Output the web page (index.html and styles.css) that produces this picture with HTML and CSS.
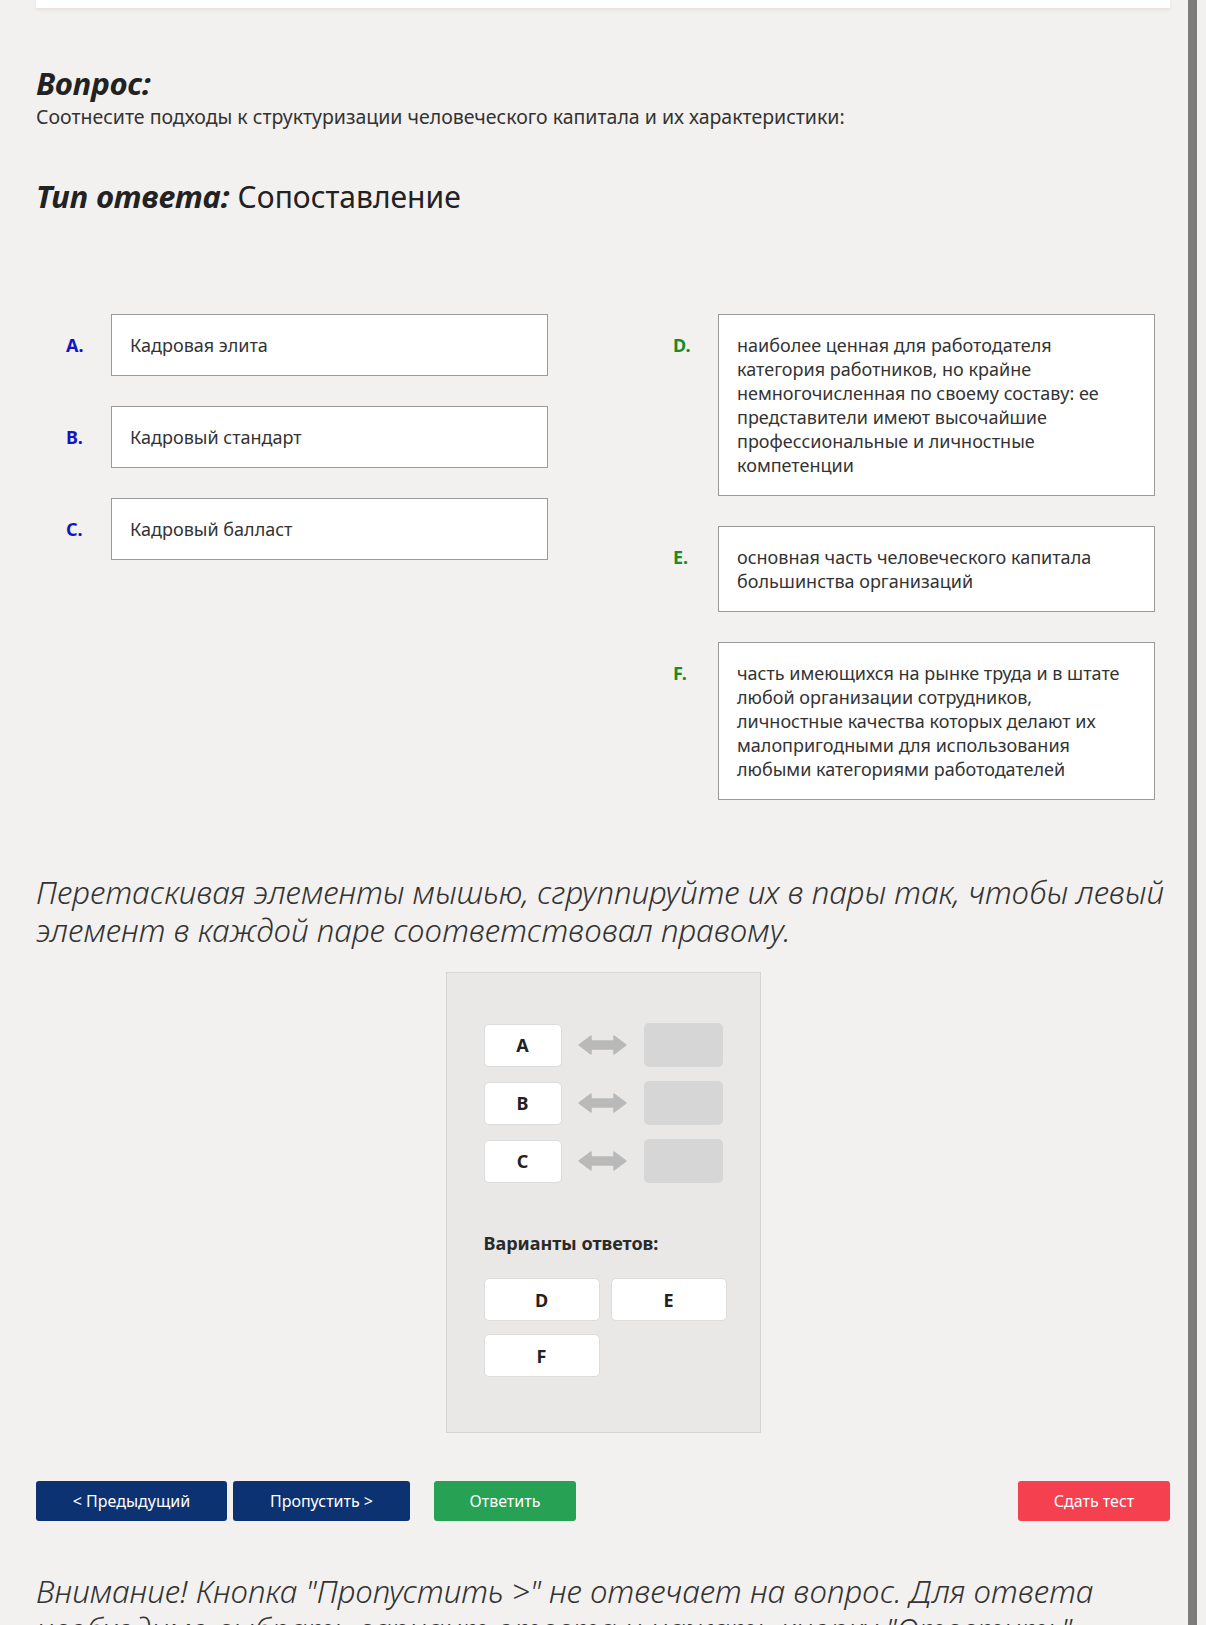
FILE: index.html
```html
<!DOCTYPE html>
<html lang="ru">
  <head>
    <meta charset="UTF-8" />
    <meta name="viewport" content="width=device-width, initial-scale=1.0" />
    <title>Тест — вопрос на сопоставление</title>
    <link rel="stylesheet" href="styles.css">
  </head>
  <body>
    <div class="page">
      <div class="prev-card"></div>

      <h2 class="q-title">Вопрос:</h2>
      <p class="q-text">Соотнесите подходы к структуризации человеческого капитала и их характеристики:</p>

      <h2 class="q-type"><em>Тип ответа:</em> <span>Сопоставление</span></h2>

      <!-- Left and right lists of the matching question -->
      <div class="match">
        <div class="match-col">
          <div class="match-row">
            <span class="mark mark-left">A.</span>
            <div class="match-box">Кадровая элита</div>
          </div>
          <div class="match-row">
            <span class="mark mark-left">B.</span>
            <div class="match-box">Кадровый стандарт</div>
          </div>
          <div class="match-row">
            <span class="mark mark-left">C.</span>
            <div class="match-box">Кадровый балласт</div>
          </div>
        </div>
        <div class="match-col">
          <div class="match-row">
            <span class="mark mark-right">D.</span>
            <div class="match-box">наиболее ценная для работодателя<br>категория работников, но крайне<br>немногочисленная по своему составу: ее<br>представители имеют высочайшие<br>профессиональные и личностные<br>компетенции</div>
          </div>
          <div class="match-row">
            <span class="mark mark-right">E.</span>
            <div class="match-box">основная часть человеческого капитала<br>большинства организаций</div>
          </div>
          <div class="match-row">
            <span class="mark mark-right">F.</span>
            <div class="match-box">часть имеющихся на рынке труда и в штате<br>любой организации сотрудников,<br>личностные качества которых делают их<br>малопригодными для использования<br>любыми категориями работодателей</div>
          </div>
        </div>
      </div>

      <p class="hint">Перетаскивая элементы мышью, сгруппируйте их в пары так, чтобы левый элемент в каждой паре соответствовал правому.</p>

      <!-- Drag and drop board -->
      <div class="board">
        <div class="pairs">
          <div class="pair">
            <div class="chip">A</div>
            <svg class="arrow" width="49" height="20" viewBox="0 0 49 20"><path d="M1 10 L13 1 L13 6 L36 6 L36 1 L48 10 L36 19 L36 14 L13 14 L13 19 Z" fill="#b9b9b9" stroke="#b9b9b9" stroke-width="1.5" stroke-linejoin="round"/></svg>
            <div class="slot"></div>
          </div>
          <div class="pair">
            <div class="chip">B</div>
            <svg class="arrow" width="49" height="20" viewBox="0 0 49 20"><path d="M1 10 L13 1 L13 6 L36 6 L36 1 L48 10 L36 19 L36 14 L13 14 L13 19 Z" fill="#b9b9b9" stroke="#b9b9b9" stroke-width="1.5" stroke-linejoin="round"/></svg>
            <div class="slot"></div>
          </div>
          <div class="pair">
            <div class="chip">C</div>
            <svg class="arrow" width="49" height="20" viewBox="0 0 49 20"><path d="M1 10 L13 1 L13 6 L36 6 L36 1 L48 10 L36 19 L36 14 L13 14 L13 19 Z" fill="#b9b9b9" stroke="#b9b9b9" stroke-width="1.5" stroke-linejoin="round"/></svg>
            <div class="slot"></div>
          </div>
        </div>

        <div class="options-title">Варианты ответов:</div>
        <div class="options">
          <div class="chip chip-wide">D</div>
          <div class="chip chip-wide">E</div>
          <div class="chip chip-wide">F</div>
        </div>
      </div>

      <div class="actions">
        <button class="btn btn-navy btn-prev">&lt; Предыдущий</button>
        <button class="btn btn-navy btn-skip">Пропустить &gt;</button>
        <button class="btn btn-green btn-answer">Ответить</button>
        <button class="btn btn-red btn-finish">Сдать тест</button>
      </div>

      <p class="notice">Внимание! Кнопка "Пропустить &gt;" не отвечает на вопрос. Для ответа необходимо выбрать вариант ответа и нажать кнопку "Ответить".</p>
    </div>
  </body>
</html>
```

FILE: styles.css
```css
html,
body {
  overflow: hidden;
}
body {
  margin: 0;
  background: #f2f1ef;
  font-family: "Noto Sans", "Open Sans", sans-serif;
  color: #2b2b2b;
}
.page {
  padding: 0 18px 40px 36px;
  margin-right: 9px;
  border-right: 9px solid #7c7c7c;
  min-height: 1700px;
}
.prev-card {
  height: 8px;
  background: #fff;
  box-shadow: 0 2px 3px rgba(210, 190, 180, 0.35);
}
.q-title {
  margin: 57px 0 0 0;
  font-size: 31px;
  line-height: 36px;
  font-style: italic;
  font-weight: 700;
  color: #222;
}
.q-text {
  margin: 3px 0 0 0;
  font-size: 19.5px;
  line-height: 26px;
  color: #333;
}
.q-type {
  margin: 47px 0 0 0;
  font-size: 31px;
  line-height: 38px;
  font-weight: 400;
  color: #222;
}
.q-type em {
  font-weight: 700;
}
.q-type span {
  font-size: 30px;
}
/* matching lists */
.match {
  display: flex;
  gap: 125px;
  margin: 98px 0 0 30px;
}
.match-col {
  display: flex;
  flex-direction: column;
  gap: 30px;
}
.match-row {
  display: flex;
  align-items: flex-start;
}
.mark {
  width: 45px;
  flex: none;
  padding-top: 19px;
  font-size: 18px;
  line-height: 24px;
  font-weight: 700;
}
.mark-left {
  color: #1414c4;
}
.mark-right {
  color: #1b8a22;
}
.match-box {
  width: 437px;
  box-sizing: border-box;
  padding: 18px 12px 18px 18px;
  background: #fff;
  border: 1px solid #9a9a9a;
  font-size: 18px;
  line-height: 24px;
  color: #333;
}
.hint {
  margin: 73px 0 0 0;
  font-size: 31.5px;
  line-height: 38px;
  font-style: italic;
  font-weight: 300;
  color: #333;
}
/* drag board */
.board {
  width: 315px;
  box-sizing: border-box;
  margin: 23px auto 0 auto;
  padding: 50px 37px 55px 37px;
  background: #e9e8e6;
  border: 1px solid #d6d5d3;
}
.pairs {
  display: flex;
  flex-direction: column;
  gap: 14px;
}
.pair {
  display: flex;
  align-items: center;
  justify-content: space-between;
}
.chip {
  width: 78px;
  height: 43px;
  box-sizing: border-box;
  display: flex;
  align-items: center;
  justify-content: center;
  background: #fff;
  border: 1px solid #dcdcdc;
  border-radius: 5px;
  font-size: 18px;
  font-weight: 700;
  color: #222;
}
.slot {
  width: 79px;
  height: 44px;
  background: #d6d6d6;
  border-radius: 5px;
}
.options-title {
  margin-top: 48px;
  font-size: 18px;
  font-weight: 700;
  color: #2a2a2a;
}
.options {
  display: grid;
  grid-template-columns: 116px 116px;
  gap: 13px 11px;
  margin-top: 23px;
}
.chip-wide {
  width: 116px;
}
/* bottom buttons */
.actions {
  display: flex;
  margin-top: 48px;
}
.btn {
  height: 40px;
  border: none;
  border-radius: 3px;
  font-family: inherit;
  font-size: 16px;
  color: #fff;
}
.btn-navy {
  background: #0d3271;
}
.btn-green {
  background: #27a254;
}
.btn-red {
  background: #f4404f;
}
.btn-prev {
  width: 191px;
}
.btn-skip {
  width: 177px;
  margin-left: 6px;
}
.btn-answer {
  width: 142px;
  margin-left: 24px;
}
.btn-finish {
  width: 152px;
  margin-left: auto;
}
.notice {
  margin: 51px 0 0 0;
  font-size: 31.5px;
  line-height: 38px;
  font-style: italic;
  font-weight: 300;
  color: #333;
}
```
